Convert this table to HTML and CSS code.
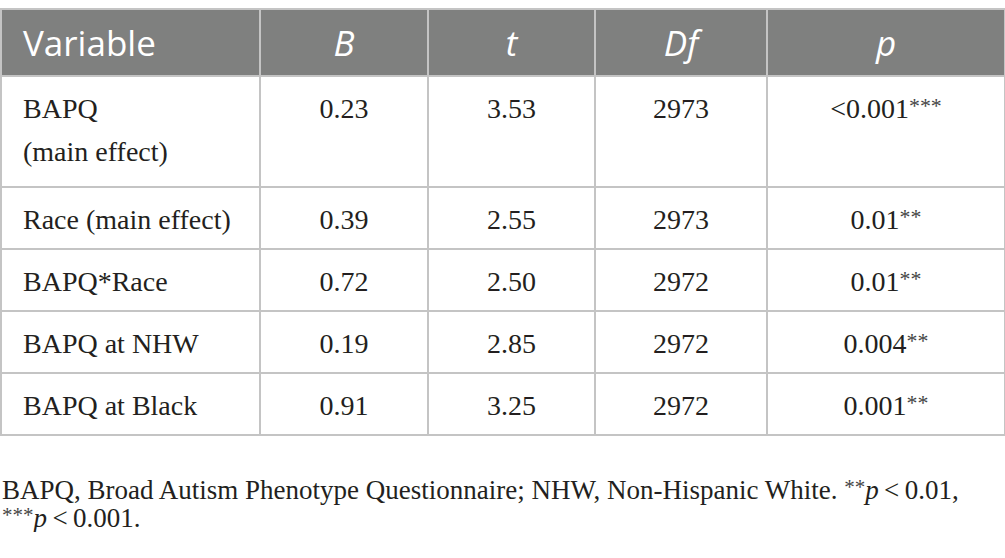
FILE: index.html
```html
<!DOCTYPE html>
<html lang="en">
<head>
  <meta charset="UTF-8">
  <title>Table</title>
  <link rel="stylesheet" href="styles.css">
</head>
<body>
  <table class="stats">
    <colgroup>
      <col class="c-var">
      <col class="c-b">
      <col class="c-t">
      <col class="c-df">
      <col class="c-p">
    </colgroup>
    <thead>
      <tr>
        <th class="left">Variable</th>
        <th><i>B</i></th>
        <th><i>t</i></th>
        <th><i>Df</i></th>
        <th><i>p</i></th>
      </tr>
    </thead>
    <tbody>
      <tr class="tall">
        <td class="left">BAPQ<br>(main effect)</td>
        <td>0.23</td>
        <td>3.53</td>
        <td>2973</td>
        <td>&lt;0.001<span class="star">***</span></td>
      </tr>
      <tr>
        <td class="left">Race (main effect)</td>
        <td>0.39</td>
        <td>2.55</td>
        <td>2973</td>
        <td>0.01<span class="star">**</span></td>
      </tr>
      <tr>
        <td class="left">BAPQ*Race</td>
        <td>0.72</td>
        <td>2.50</td>
        <td>2972</td>
        <td>0.01<span class="star">**</span></td>
      </tr>
      <tr>
        <td class="left">BAPQ at NHW</td>
        <td>0.19</td>
        <td>2.85</td>
        <td>2972</td>
        <td>0.004<span class="star">**</span></td>
      </tr>
      <tr>
        <td class="left">BAPQ at Black</td>
        <td>0.91</td>
        <td>3.25</td>
        <td>2972</td>
        <td>0.001<span class="star">**</span></td>
      </tr>
    </tbody>
  </table>

  <p class="note">BAPQ, Broad Autism Phenotype Questionnaire; NHW, Non-Hispanic White. <span class="star">**</span><i>p</i>&#8201;&lt;&#8201;0.01, <span class="star">***</span><i>p</i>&#8201;&lt;&#8201;0.001.</p>
</body>
</html>
```

FILE: styles.css
```css
body {
  margin: 0;
  padding-top: 8px;
  background: #fff;
  color: #231f20;
  font-family: "Liberation Serif", "Times New Roman", serif;
}

/* table */
.stats {
  width: 1004px;
  border-collapse: collapse;
  table-layout: fixed;
}

.c-var { width: 259px; }
.c-b { width: 168px; }
.c-t { width: 167px; }
.c-df { width: 172px; }
.c-p { width: 238px; }

.stats th,
.stats td {
  border: 2px solid #c4c4c4;
  text-align: center;
}

.stats th {
  background: #7f807f;
  color: #fff;
  font-family: "Open Sans", "Noto Sans", sans-serif;
  font-weight: 400;
  font-size: 35px;
  line-height: 44px;
  padding: 11px 21px 10px;
}

.stats th i {
  font-style: italic;
}

.stats td {
  font-family: "Liberation Serif", "Times New Roman", serif;
  font-size: 28px;
  line-height: 43px;
  padding: 10px 21px 7px;
  vertical-align: top;
}

.stats tr.tall td {
  padding-bottom: 13px;
}

.stats .left {
  text-align: left;
}

.star {
  font-size: 0.78em;
  vertical-align: 0.25em;
  line-height: 0;
  color: #444;
}

/* footnote */
.note {
  margin: 40px 0 0 2px;
  font-size: 27px;
  line-height: 28px;
}
```
